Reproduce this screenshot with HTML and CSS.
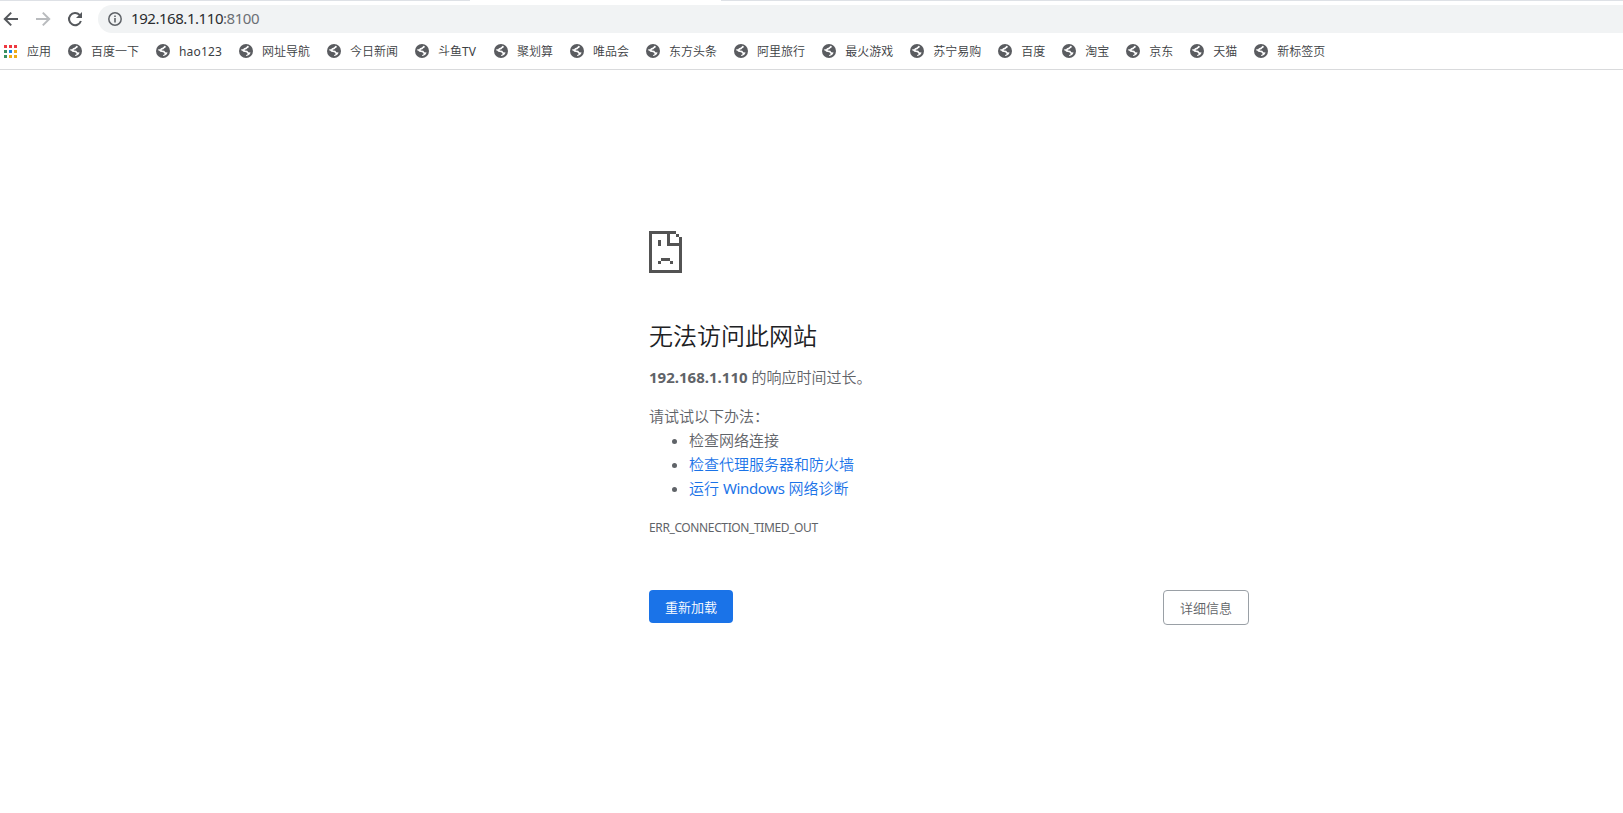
FILE: index.html
```html
<!DOCTYPE html>
<html lang="zh-CN">
<head>
<meta charset="utf-8">
<title>192.168.1.110</title>
<link rel="stylesheet" href="styles.css">
</head>
<body>
<svg class="defs" width="0" height="0"><symbol id="globe" viewBox="0 0 14 14"><circle cx="7" cy="7" r="7" fill="#5a5c60"/><path d="M8.6 1.8 9.8 2.3 9.6 3.6 8.3 4.2 7.4 5.3 5.7 5.7 5.8 6.5 8.3 6.7 9.3 8.3 11.6 8.5 10.8 10.3 9 11.6 7 12 7.2 11 8.5 10.4 8.4 9.3 7.2 8.2 4.4 7.7 3 6.6 2 6.2 2.4 5.3 4.2 5.3 4.9 4.2 6.9 3.4Z" fill="#fff"/></symbol></svg>
<header class="browser">
  <div class="tab-edge"><span class="edge-left"></span><span class="edge-right"></span></div>
  <div class="toolbar">
    <svg class="nav" viewBox="0 0 16 16"><path d="M15 8H2.2M8.2 1.6 1.8 8l6.4 6.4" fill="none" stroke="#55585c" stroke-width="2"/></svg>
    <svg class="nav" viewBox="0 0 16 16"><path d="M1 8h12.8M7.8 1.6 14.2 8l-6.4 6.4" fill="none" stroke="#b9bbbe" stroke-width="2"/></svg>
    <svg class="nav" viewBox="0 0 16 16"><path d="M13.9 10A6.1 6.1 0 1 1 12.6 3.9L14 5.4" fill="none" stroke="#55585c" stroke-width="2"/><path d="M15 1v6H9z" fill="#55585c"/></svg>
    <div class="omnibox">
      <svg class="info" viewBox="0 0 14 14"><circle cx="7" cy="7" r="6.2" fill="none" stroke="#5f6368" stroke-width="1.5"/><path d="M6.2 6.1h1.6v4.4H6.2zM6.2 3.4h1.6V5H6.2z" fill="#5f6368"/></svg>
      <span class="url">192.168.1.110<span class="port">:8100</span></span>
    </div>
  </div>
  <nav class="bookmarks">
    <a class="mark apps"><svg class="grid" viewBox="0 0 13 13" shape-rendering="crispEdges"><path d="M0 0h3v3H0zM5 0h3v3H5zM10 0h3v3h-3z" fill="#ee3840"/><path d="M0 5h3v3H0zM0 10h3v3H0z" fill="#399060"/><path d="M5 5h3v3H5z" fill="#1a84e8"/><path d="M10 5h3v3h-3zM5 10h3v3H5zM10 10h3v3h-3z" fill="#efac16"/></svg><span>应用</span></a>
    <a class="mark"><svg class="globe"><use href="#globe"/></svg><span>百度一下</span></a>
    <a class="mark"><svg class="globe"><use href="#globe"/></svg><span class="hao">hao123</span></a>
    <a class="mark"><svg class="globe"><use href="#globe"/></svg><span>网址导航</span></a>
    <a class="mark"><svg class="globe"><use href="#globe"/></svg><span>今日新闻</span></a>
    <a class="mark"><svg class="globe"><use href="#globe"/></svg><span class="douyu">斗鱼<b class="latin">TV</b></span></a>
    <a class="mark"><svg class="globe"><use href="#globe"/></svg><span>聚划算</span></a>
    <a class="mark"><svg class="globe"><use href="#globe"/></svg><span>唯品会</span></a>
    <a class="mark"><svg class="globe"><use href="#globe"/></svg><span>东方头条</span></a>
    <a class="mark"><svg class="globe"><use href="#globe"/></svg><span>阿里旅行</span></a>
    <a class="mark"><svg class="globe"><use href="#globe"/></svg><span>最火游戏</span></a>
    <a class="mark"><svg class="globe"><use href="#globe"/></svg><span>苏宁易购</span></a>
    <a class="mark"><svg class="globe"><use href="#globe"/></svg><span>百度</span></a>
    <a class="mark"><svg class="globe"><use href="#globe"/></svg><span>淘宝</span></a>
    <a class="mark"><svg class="globe"><use href="#globe"/></svg><span>京东</span></a>
    <a class="mark"><svg class="globe"><use href="#globe"/></svg><span>天猫</span></a>
    <a class="mark"><svg class="globe"><use href="#globe"/></svg><span>新标签页</span></a>
  </nav>
</header>
<main class="error">
  <svg class="sad" viewBox="0 0 11 14" shape-rendering="crispEdges"><path d="M0 0h9v1H7v3h3V2h1v12H0zM1 1v12h9V5H6V1zM9 1h1v1H9zM3 3h1v2H3zM4 9h3v1H4zM3 10h1v1H3zM7 10h1v1H7z" fill="#535353" fill-rule="evenodd"/></svg>
  <h1 class="title">无法访问此网站</h1>
  <p class="summary"><strong class="host">192.168.1.110</strong> 的响应时间过长。</p>
  <p class="try">请试试以下办法：</p>
  <ul class="tips">
    <li>检查网络连接</li>
    <li><a class="link">检查代理服务器和防火墙</a></li>
    <li><a class="link">运行 <span class="win">Windows</span> 网络诊断</a></li>
  </ul>
  <div class="code">ERR_CONNECTION_TIMED_OUT</div>
  <div class="actions">
    <button class="btn reload">重新加载</button>
    <button class="btn details">详细信息</button>
  </div>
</main>
</body>
</html>
```
FILE: styles.css
```css
* { box-sizing: border-box; }
body {
  margin: 0;
  background: #fff;
  color: #5f6368;
  font: 15px/24px "Noto Sans", "Noto Sans CJK SC", sans-serif;
  font-weight: 350;
  overflow: hidden;
}
.defs { position: absolute; }
.browser { height: 70px; border-bottom: 1px solid #d9dadc; }
.tab-edge { display: flex; justify-content: space-between; height: 5px; }
.edge-left { width: 470px; height: 1px; background: #dee1e6; }
.edge-right { width: 902px; height: 1px; background: #dee1e6; }
.toolbar { display: flex; align-items: center; height: 28px; padding-left: 3px; }
.nav { width: 16px; height: 16px; margin-right: 16px; flex: none; }
.omnibox {
  display: flex;
  align-items: center;
  flex: 1;
  height: 28px;
  margin-left: -1px;
  padding-left: 10px;
  border-radius: 14px 0 0 14px;
  background: #f1f3f4;
}
.info { width: 14px; height: 14px; margin-right: 9px; }
.url { padding-bottom: 2px; color: #2b2d30; font-size: 15px; font-weight: 400; letter-spacing: -0.45px; }
.port { color: #6b6f74; }
.bookmarks { display: flex; align-items: center; height: 36px; padding-left: 4px; }
.mark {
  display: flex;
  align-items: center;
  gap: 9px;
  margin-right: 17px;
  color: #3c4043;
  font: 12px/18px "Noto Sans", "Noto Sans CJK SC", sans-serif;
  font-weight: 350;
  white-space: nowrap;
}
.mark span { padding-top: 2px; }
.apps { gap: 10px; }
.grid { width: 13px; height: 13px; }
.globe { width: 14px; height: 14px; }
.hao { width: 43px; font-weight: 400; letter-spacing: 0.15px; }
.douyu { width: 39px; }
.latin { font-weight: 400; }
.error { width: 600px; margin: 161px 0 0 649px; }
.sad { display: block; width: 33px; height: 42px; }
.title {
  margin: 48px 0 0;
  color: #202124;
  font-size: 24px;
  font-weight: 350;
  line-height: 29px;
}
.summary { margin: 15px 0 0; }
.host { font-weight: 700; letter-spacing: 0.01px; }
.try { margin: 15px 0 0; }
.tips { margin: 0; padding-left: 40px; }
.link { color: #1a73e8; }
.win { font-weight: 400; letter-spacing: -0.35px; }
.code { margin-top: 16px; font-size: 12px; font-weight: 400; letter-spacing: -0.38px; }
.actions { display: flex; justify-content: space-between; align-items: flex-start; margin-top: 50px; }
.btn {
  padding: 0;
  border-radius: 4px;
  font: 13px/20px "Noto Sans CJK SC", sans-serif;
  font-weight: 350;
}
.reload { width: 84px; height: 33px; border: 0; background: #1a73e8; color: #fff; }
.details { width: 86px; height: 35px; border: 1px solid #9aa0a6; background: #fff; color: #5f6368; }
```
